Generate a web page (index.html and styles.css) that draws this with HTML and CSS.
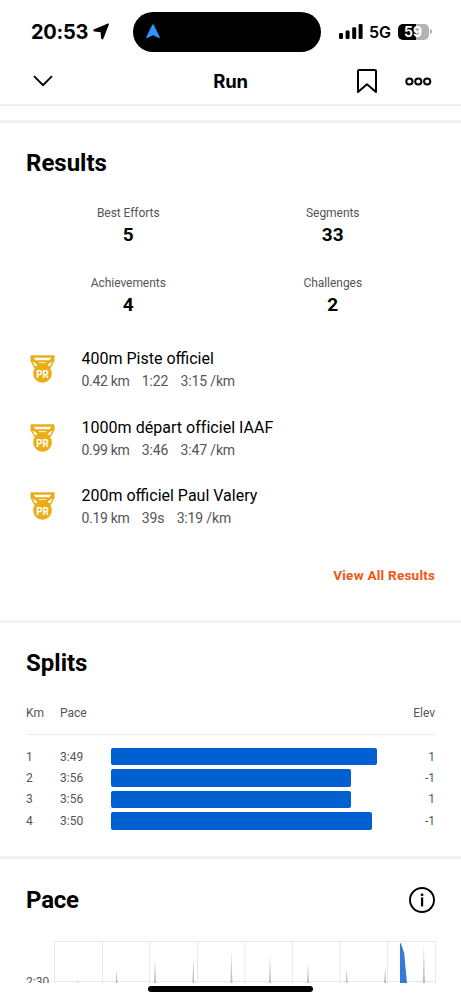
FILE: index.html
```html
<!DOCTYPE html>
<html lang="en">
<head>
<meta charset="utf-8">
<meta name="viewport" content="width=device-width">
<title>Run</title>
<link rel="stylesheet" href="styles.css">
</head>
<body>
<svg class="defs" width="0" height="0" aria-hidden="true">
  <symbol id="medal" viewBox="0 0 24 27">
    <path d="M1.4 1.2H22.6V5.5L19.3 11.5H4.7L1.4 5.5Z" fill="#ebad17" stroke="#ebad17" stroke-width="2" stroke-linejoin="round"/>
    <circle cx="12" cy="17.8" r="9" fill="#ebad17"/>
    <path d="M3.6 2.7H20.4L18.8 5H5.2ZM2.3 6.6L4.6 7.4L7.2 9.7L5 11ZM21.7 6.6L19.4 7.4L16.8 9.7L19 11ZM8.2 6.9H15.8L14.8 8Q12 7.5 9.2 8Z" fill="#fff"/>
  </symbol>
</svg>
<div class="screen">
  <header class="status">
    <div class="clock"><span>20:53</span>
      <svg width="17" height="17" viewBox="0 0 17 17"><path d="M15.2 1.2L1.5 6.8Q.4 7.5 1.6 7.9L8.2 8.6L8.8 15.1Q9.2 16.3 9.8 15.2Z" stroke="#000" stroke-width="1.4" stroke-linejoin="round"/></svg>
    </div>
    <div class="island"><svg width="14" height="15" viewBox="0 0 14 15"><path d="M7 1.2L13 13.3L7 10.2L1 13.3Z" fill="#2e96ff" stroke="#2e96ff" stroke-width="1.6" stroke-linejoin="round"/></svg></div>
    <div class="signals">
      <svg width="24" height="15" viewBox="0 0 24 15"><rect x="0" y="9" width="4" height="6" rx="1.2"/><rect x="6.6" y="6.5" width="4" height="8.5" rx="1.2"/><rect x="13.2" y="3.3" width="4" height="11.7" rx="1.2"/><rect x="19.6" y="0" width="4" height="15" rx="1.2"/></svg>
      <span class="network">5G</span>
      <span class="battery">59</span><i class="battery-tip"></i>
    </div>
  </header>
  <nav class="nav">
    <svg width="20" height="12" viewBox="0 0 20 12"><path d="M1 1.2L10 10.2L19 1.2" fill="none" stroke="#000" stroke-width="1.9"/></svg>
    <h1>Run</h1>
    <div class="actions">
      <svg width="20" height="25" viewBox="0 0 20 25"><path d="M1 2Q1 1 2 1H18Q19 1 19 2V23L10 15.3L1 23Z" fill="none" stroke="#000" stroke-width="2" stroke-linejoin="round"/></svg>
      <svg width="27" height="9" viewBox="0 0 27 9"><g fill="none" stroke="#000" stroke-width="2"><circle cx="4.4" cy="4.5" r="3.1"/><circle cx="13.3" cy="4.5" r="3.1"/><circle cx="22.2" cy="4.5" r="3.1"/></g></svg>
    </div>
  </nav>
  <section class="results">
    <h2>Results</h2>
    <dl class="stats">
      <div><dt>Best Efforts</dt><dd>5</dd></div>
      <div><dt>Segments</dt><dd>33</dd></div>
      <div><dt>Achievements</dt><dd>4</dd></div>
      <div><dt>Challenges</dt><dd>2</dd></div>
    </dl>
    <ul class="efforts">
      <li><svg class="medal" viewBox="0 0 24 27"><use href="#medal"/><text x="12" y="21.7" textLength="12" lengthAdjust="spacingAndGlyphs">PR</text></svg>
        <div><h3>400m Piste officiel</h3><p><span>0.42 km</span><span>1:22</span><span>3:15 /km</span></p></div></li>
      <li><svg class="medal" viewBox="0 0 24 27"><use href="#medal"/><text x="12" y="21.7" textLength="12" lengthAdjust="spacingAndGlyphs">PR</text></svg>
        <div><h3 class="long">1000m départ officiel IAAF</h3><p><span>0.99 km</span><span>3:46</span><span>3:47 /km</span></p></div></li>
      <li><svg class="medal" viewBox="0 0 24 27"><use href="#medal"/><text x="12" y="21.7" textLength="12" lengthAdjust="spacingAndGlyphs">PR</text></svg>
        <div><h3>200m officiel Paul Valery</h3><p><span>0.19 km</span><span>39s</span><span>3:19 /km</span></p></div></li>
    </ul>
    <div class="view-all">View All Results</div>
  </section>
  <section class="splits">
    <h2>Splits</h2>
    <div class="split-head"><span>Km</span><span>Pace</span><span class="elev">Elev</span></div>
    <div class="split"><span>1</span><span>3:49</span><i style="width:266px"></i><span class="elev">1</span></div>
    <div class="split"><span>2</span><span>3:56</span><i style="width:239.5px"></i><span class="elev">-1</span></div>
    <div class="split"><span>3</span><span>3:56</span><i style="width:239.5px"></i><span class="elev">1</span></div>
    <div class="split"><span>4</span><span>3:50</span><i style="width:260.5px"></i><span class="elev">-1</span></div>
  </section>
  <section class="pace">
    <div class="pace-head"><h2>Pace</h2>
      <svg width="26" height="26" viewBox="0 0 26 26"><circle cx="13" cy="13" r="12" fill="none" stroke="#000" stroke-width="1.9"/><rect x="12" y="10.4" width="2.2" height="9"/><rect x="11.8" y="6.6" width="2.5" height="2.3"/></svg>
    </div>
    <div class="chart">
      <span class="axis">2:30</span>
      <svg width="383" height="43" viewBox="54 940 383 43">
        <defs><linearGradient id="fade" x1="0" y1="0" x2="0" y2="1"><stop offset="0" stop-color="#e4e4e4"/><stop offset="1" stop-color="#bdbdbd"/></linearGradient></defs>
        <path d="M54.5 983V941.5H435.5V983M54.5 981.5H435.5M102.5 941V983M149.5 941V983M197.5 941V983M245 941V983M292.5 941V983M340 941V983M387.5 941V983" fill="none" stroke="#e9e9e9"/>
        <path d="M77.4 983L78 980L78.6 983ZM115.7 983L116.4 970L117.6 983ZM154 983L154.8 958L156.2 983ZM192.3 983L193.5 959L194.3 983ZM230.5 983L231.2 951L232.5 983ZM269 983L270 952L271 983ZM307 983L308 961L309 983ZM345.8 983L346.5 968L347.6 983ZM384 983L385.2 967L386 983ZM422.7 983L423.8 943L425 983Z" fill="url(#fade)"/>
        <path d="M400 983V944Q400.7 941.5 401.5 945L404.3 953.5L405 962L407 983Z" fill="#347bd5"/>
      </svg>
    </div>
  </section>
  <footer class="home"></footer>
</div>
</body>
</html>
```
FILE: styles.css
```css
* { box-sizing: border-box; }
body { margin: 0; background: #fff; color: #000; font-family: Roboto, sans-serif; }
h1, h2, h3, p, ul, dl, dd { margin: 0; padding: 0; }
ul { list-style: none; }
svg { display: block; flex: none; }
.defs { position: absolute; }
.screen { width: 461px; height: 1000px; overflow: hidden; display: flex; flex-direction: column; }
.status { height: 63px; display: flex; align-items: center; font-family: Inter, sans-serif; }
.clock { width: 133px; padding-left: 31px; display: flex; align-items: center; gap: 4px; font-size: 20px; font-weight: 700; }
.clock span { width: 58px; letter-spacing: -.25px; }
.island { width: 188px; height: 40px; border-radius: 20px; background: #000; padding-left: 13px; display: flex; align-items: center; }
.signals { display: flex; align-items: center; padding-left: 17.5px; }
.network { width: 28.5px; margin-left: 6.5px; font-size: 16px; font-weight: 600; }
.battery { width: 31px; height: 16px; border-radius: 5px; background: linear-gradient(90deg, #000 58%, #b3b3b3 58%); color: #fff; font-size: 14px; font-weight: 700; line-height: 16px; text-align: center; }
.battery-tip { width: 2px; height: 5px; margin-left: 1px; border-radius: 0 2px 2px 0; background: #b3b3b3; }
.nav { height: 43px; padding: 0 29px 5px 33px; display: grid; grid-template-columns: 75px 1fr 75px; align-items: center; border-bottom: 2px solid #eee; }
.nav h1 { font: 700 18.5px/24px Inter, sans-serif; text-align: center; letter-spacing: -.3px; padding-right: 4px; }
.actions { display: flex; align-items: center; justify-content: space-between; }
section { border-top: 3px solid #f2f2f2; padding: 0 26px; }
h2 { font-size: 24px; line-height: 30px; font-weight: 700; }
.results { height: 500px; margin-top: 14px; padding-top: 25px; }
.stats { display: grid; grid-template-columns: 1fr 1fr; grid-auto-rows: 70px; margin-top: 27px; text-align: center; }
.stats dt { font-size: 12px; line-height: 16px; color: #555; letter-spacing: -.05px; }
.stats dd { font-size: 19px; line-height: 24px; margin-top: 2px; font-weight: 700; }
.efforts { margin-top: 3px; }
.efforts li { height: 68.7px; display: flex; gap: 26px; }
.medal { width: 25px; height: 28px; margin: 7px 0 0 4px; }
.medal + div { margin-left: .5px; }
.medal text { font: 700 10.5px Roboto, sans-serif; fill: #fff; text-anchor: middle; }
.efforts h3 { font-size: 16px; line-height: 22px; font-weight: 400; }
.efforts h3.long { letter-spacing: .03px; }
.efforts p { display: flex; gap: 12.3px; font-size: 14px; line-height: 22px; color: #555; letter-spacing: -.15px; }
.efforts p span:first-child { letter-spacing: -.3px; }
.view-all { margin-top: 11px; text-align: right; color: #f35412; font-size: 13.5px; line-height: 20px; font-weight: 700; letter-spacing: .25px; margin-right: -.25px; }
.splits { height: 235.5px; padding-top: 25px; font-size: 12px; color: #555; }
.splits h2 { color: #000; }
.split-head, .split { display: flex; align-items: center; }
.split-head { height: 43px; margin: 14px 0 11px; border-bottom: 1px solid #eee; }
.split { height: 21.4px; }
.split-head span:first-child, .split span:first-child { width: 34px; }
.split span:nth-child(2) { width: 51.4px; }
.split i { height: 17.4px; background: #005fd1; border-radius: 2px; }
.splits .elev { margin-left: auto; }
.pace { height: 127px; overflow: hidden; padding-top: 26px; }
.pace-head { display: flex; align-items: center; justify-content: space-between; }
.pace h2 { letter-spacing: -.2px; }
.chart { display: flex; width: 411px; margin-top: 25px; height: 43px; overflow: hidden; }
.axis { width: 28px; padding-top: 34px; font-size: 12px; line-height: 16px; color: #555; white-space: nowrap; flex: none; }
.home { width: 165px; height: 5.5px; margin: 3.5px auto 0 148px; border-radius: 3px; background: #000; flex: none; }
```
